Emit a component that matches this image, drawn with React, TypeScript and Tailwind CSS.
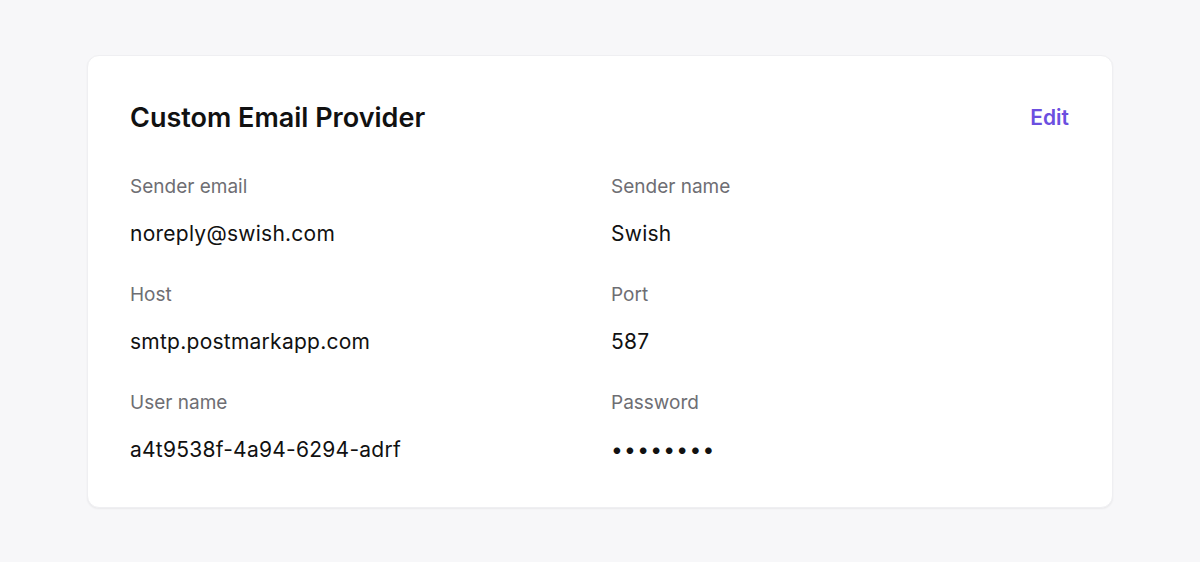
const fields = [
  { label: "Sender email", value: "noreply@swish.com" },
  { label: "Sender name", value: "Swish" },
  { label: "Host", value: "smtp.postmarkapp.com" },
  { label: "Port", value: "587" },
  { label: "User name", value: "a4t9538f-4a94-6294-adrf" },
  { label: "Password", value: "••••••••", secret: true },
];

export default function App() {
  return (
    <div className="min-h-screen bg-[#f7f7f9] px-[87px] pt-[55px] font-['Inter',sans-serif]">
      <div className="bg-white rounded-xl shadow-[0_1px_2px_rgba(0,0,0,0.06)] border border-[#efeff2] px-[42px] pt-[46px] pb-[43px]">
        {/* Header */}
        <div className="flex items-center justify-between">
          <h2 className="text-[27px] leading-8 font-semibold text-[#111]">Custom Email Provider</h2>
          <button className="mr-[1px] text-[21px] leading-7 font-semibold text-[#6b4fe0]">Edit</button>
        </div>

        {/* Details */}
        <div className="grid grid-cols-2 gap-x-[22px] gap-y-[35px] mt-[41px]">
          {fields.map((f) => (
            <div key={f.label}>
              <p className="text-[19px] leading-6 text-[#6e6e73]">{f.label}</p>
              <p
                className={
                  f.secret
                    ? "mt-[21px] text-[21px] leading-7 text-[#111] tracking-[0.06em]"
                    : "mt-[21px] text-[21px] leading-7 text-[#111] tracking-[0.012em]"
                }
              >
                {f.value}
              </p>
            </div>
          ))}
        </div>
      </div>
    </div>
  );
}
